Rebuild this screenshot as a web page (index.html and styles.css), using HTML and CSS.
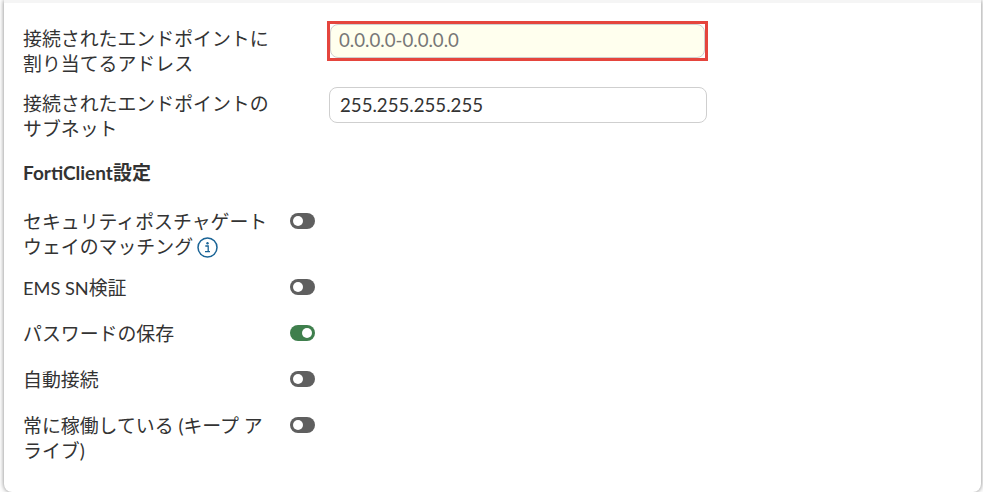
FILE: index.html
```html
<!DOCTYPE html>
<html lang="ja">
<head>
  <meta charset="UTF-8" />
  <meta name="viewport" content="width=device-width, initial-scale=1.0" />
  <title>FortiClient設定</title>
  <link rel="stylesheet" href="styles.css">
</head>
<body>
  <div class="card">
    <!-- Address fields -->
    <div class="row">
      <label class="label">接続されたエンドポイントに割り当てるアドレス</label>
      <div class="field-wrap field-error">
        <input class="field field-empty" type="text" placeholder="0.0.0.0-0.0.0.0">
      </div>
    </div>
    <div class="row">
      <label class="label">接続されたエンドポイントのサブネット</label>
      <div class="field-wrap">
        <input class="field" type="text" value="255.255.255.255">
      </div>
    </div>

    <h3 class="heading">FortiClient設定</h3>

    <!-- Toggles -->
    <div class="toggle-row toggle-row-first">
      <span class="label">セキュリティポスチャゲートウェイのマッチング
        <svg class="info" width="21" height="21" viewBox="0 0 21 21" aria-hidden="true">
          <circle cx="10.5" cy="10.5" r="9.5" fill="none" stroke="#1a6496" stroke-width="1.5"/>
          <circle cx="10.5" cy="6.3" r="1.2" fill="#1a6496"/>
          <path d="M8.3 9h2.9v5.6h1.7M8 14.6h5" fill="none" stroke="#1a6496" stroke-width="1.3"/>
        </svg>
      </span>
      <span class="toggle"></span>
    </div>
    <div class="toggle-row">
      <span class="label"><span class="latin">EMS SN</span>検証</span>
      <span class="toggle"></span>
    </div>
    <div class="toggle-row">
      <span class="label">パスワードの保存</span>
      <span class="toggle on"></span>
    </div>
    <div class="toggle-row">
      <span class="label">自動接続</span>
      <span class="toggle"></span>
    </div>
    <div class="toggle-row">
      <span class="label">常に稼働している (キープ アライブ)</span>
      <span class="toggle"></span>
    </div>
  </div>
</body>
</html>
```

FILE: styles.css
```css
html, body {
  height: 100%;
}

body {
  margin: 0;
  background: #fff;
  font-family: 'Lato', 'Noto Sans CJK JP', sans-serif;
  font-size: 18.67px;
  line-height: 25px;
  color: #333;
  overflow: hidden;
}

.card {
  box-sizing: border-box;
  height: 492px;
  margin: 0 2px 0 4px;
  padding: 24px 19px 0;
  border-top: 3px solid #f5f5f5;
  background: #fff;
  border-radius: 0 0 8px 8px;
  box-shadow: 0 0 5px rgba(0,0,0,0.5);
}

.row {
  display: flex;
  margin-bottom: 15px;
}

.label {
  display: block;
  width: 247px;
  margin: -1px 0 1px;
  font-size: 18.9px;
}

.latin {
  font-size: 18.2px;
  line-height: 1;
}

.field-wrap {
  margin-top: -5px;
  margin-left: 59px;
  width: 378px;
  height: 36px;
}

.field-error {
  box-sizing: border-box;
  margin-top: -6px;
  margin-left: 57px;
  width: 381px;
  height: 40px;
  border: 3px solid #e5453d;
}

.field {
  box-sizing: border-box;
  width: 100%;
  height: 36px;
  padding: 0 10px;
  border: 1px solid #cfcfcf;
  border-radius: 8px;
  background: #fff;
  font: inherit;
  color: #333;
  outline: none;
}

.field-empty {
  display: block;
  height: 34px;
  padding: 0 8px 2px;
  background: #ffffee;
}

.field-empty::placeholder {
  color: #777;
  opacity: 1;
}

.heading {
  margin: 18px 0 25px;
  font-size: 19px;
  font-weight: 700;
  line-height: 25px;
}

.toggle-row {
  display: flex;
  margin-bottom: 21px;
}

.toggle-row-first {
  margin-bottom: 16px;
}

.info {
  margin-left: -1px;
  vertical-align: -4px;
}

.toggle {
  position: relative;
  flex: none;
  width: 25px;
  height: 16px;
  margin: 3px 0 0 20px;
  border-radius: 8px;
  background: #5f5f5f;
}

.toggle::after {
  content: "";
  position: absolute;
  top: 3px;
  left: 3px;
  width: 10px;
  height: 10px;
  border-radius: 50%;
  background: #fff;
}

.toggle.on {
  background: #3f7f4d;
}

.toggle.on::after {
  left: 12px;
}
```
